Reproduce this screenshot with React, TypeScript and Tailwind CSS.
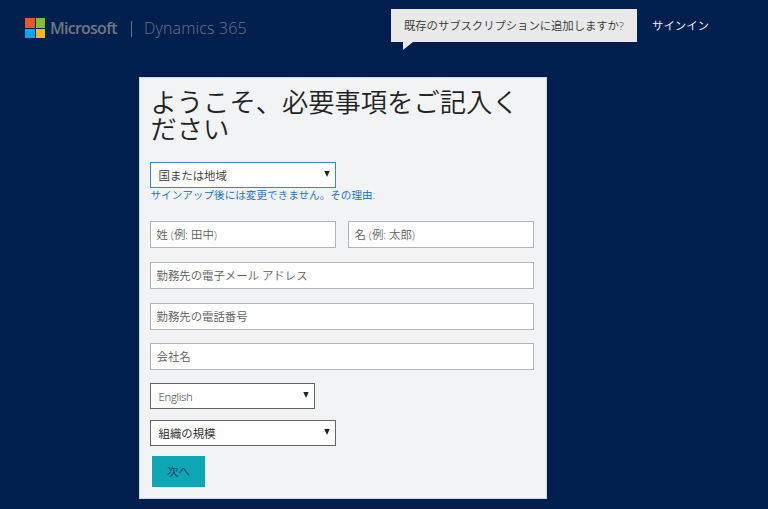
import type { ReactNode } from "react";

const JP = "font-['Open_Sans','Noto_Sans_CJK_JP',sans-serif]";

function Logo() {
  return (
    <div className="mt-[18px] ml-[25px] grid size-[20px] shrink-0 grid-cols-2 gap-px">
      <span className="bg-[#f35426]" />
      <span className="bg-[#82bd41]" />
      <span className="bg-[#05a7ee]" />
      <span className="bg-[#fdb913]" />
    </div>
  );
}

function Field({ label, className = "" }: { label: string; className?: string }) {
  return (
    <div className={`flex h-[27px] items-center border border-[#b2b4b7] bg-white pl-[5.5px] text-[11.4px] whitespace-nowrap text-[#5c5c5c] ${className}`}>
      <span>{label}</span>
    </div>
  );
}

function Select({ children, className = "" }: { children: ReactNode; className?: string }) {
  return (
    <div className={`flex h-[26px] items-center justify-between border bg-white pr-[5px] pl-[7.5px] text-[11.4px] whitespace-nowrap ${className}`}>
      <span className="pt-px">{children}</span>
      <svg width="6" height="6" viewBox="0 0 6 6" className="mb-[2px]">
        <path d="M.3 0h5.4L3 6z" fill="#222" />
      </svg>
    </div>
  );
}

export default function App() {
  return (
    <div lang="ja" className={`flex h-[509px] w-[768px] flex-col overflow-hidden bg-[#001f4e] font-[350] ${JP}`}>
      <header className="flex h-[77px] shrink-0 items-start">
        <Logo />
        <span className="mt-[17px] ml-[5px] w-[68px] text-[16px] leading-[22px] font-semibold tracking-[-0.75px] text-[#6d7882]">Microsoft</span>
        <span className="mt-[21px] ml-[13px] h-[16px] w-px bg-[#65727e]" />
        <span className="mt-[17px] ml-[12px] w-[103px] text-[16px] leading-[22px] tracking-[0.15px] whitespace-nowrap text-[#6b7887]">Dynamics 365</span>
        <div className="relative mt-[9px] ml-[144px] flex h-[33px] w-[246px] items-center bg-[#e9e9e9] pl-[13px] text-[11.4px] whitespace-nowrap text-[#333]">
          <span className="tracking-[-0.08px]">既存のサブスクリプションに追加しますか?</span>
          <svg className="absolute top-[33px] left-[12px]" width="10" height="8" viewBox="0 0 10 8">
            <path d="M0 0h10L0 8z" fill="#e9e9e9" />
          </svg>
        </div>
        <span className="mt-[17px] ml-[15px] text-[11.4px] leading-[18px] whitespace-nowrap text-white">サインイン</span>
      </header>

      <main className="ml-[139px] flex h-[422px] w-[408px] shrink-0 flex-col items-start border border-[#cbdce8] bg-[#f1f3f5] pl-[10px]">
        <h1 className="mt-[11px] ml-[0.5px] h-[54px] w-[380px] text-[26.3px] leading-[27px] text-[#222]">
          ようこそ、必要事項をご記入く
          <br />
          ださい
        </h1>
        <Select className="mt-[19px] w-[186px] border-[#3b82e8] text-[#333]">国または地域</Select>
        <p className="ml-[0.5px] h-[16px] text-[10.6px] leading-[15px] whitespace-nowrap text-[#0a6cc2]">サインアップ後には変更できません。その理由:</p>
        <div className="mt-[17px] flex gap-[12px]">
          <Field label="姓 (例: 田中)" className="w-[186px]" />
          <Field label="名 (例: 太郎)" className="w-[186px]" />
        </div>
        <Field label="勤務先の電子メール アドレス" className="mt-[14px] w-[384px]" />
        <Field label="勤務先の電話番号" className="mt-[14px] w-[384px]" />
        <Field label="会社名" className="mt-[13px] w-[384px]" />
        <Select className="mt-[13px] w-[165px] border-[#666] font-light tracking-[-0.3px] text-[#333]">English</Select>
        <Select className="mt-[11px] w-[186px] border-[#666] text-[#222]">組織の規模</Select>
        <button className="mt-[10px] ml-[2px] flex h-[31px] w-[53px] items-center justify-center bg-[#0ea5b5] text-[11.4px] text-[#05385a]">
          次へ
        </button>
      </main>
    </div>
  );
}
